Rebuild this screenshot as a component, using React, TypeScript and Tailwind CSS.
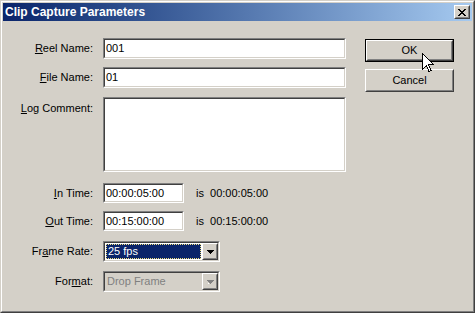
import type { ReactNode } from 'react';

const font = { fontFamily: '"Liberation Sans", Arial, sans-serif' };

function Sunken({ className = '', children, bg = 'bg-white' }: { className?: string; children?: ReactNode; bg?: string }) {
  return (
    <div className={`border border-t-[#808080] border-l-[#808080] border-b-white border-r-white ${className}`}>
      <div className={`h-full border border-t-[#404040] border-l-[#404040] border-b-[#d4d0c8] border-r-[#d4d0c8] ${bg} flex items-center`}>
        {children}
      </div>
    </div>
  );
}

function Raised({ className = '', children }: { className?: string; children?: ReactNode }) {
  return (
    <div className={`border border-t-white border-l-white border-b-[#404040] border-r-[#404040] bg-[#d4d0c8] ${className}`}>
      <div className="h-full border border-t-[#d4d0c8] border-l-[#d4d0c8] border-b-[#808080] border-r-[#808080] flex items-center justify-center">
        {children}
      </div>
    </div>
  );
}

function Arrow({ color = '#000', shadow = false }: { color?: string; shadow?: boolean }) {
  return (
    <svg width="8" height="5" viewBox="0 0 8 5" className="block">
      {shadow && <path d="M2 4h1v1h-1zM3 3h1v1h-1zM4 2h1v1h-1zM5 1h1v1h-1z" fill="#fff" />}
      <path d="M0.5 0.5h7v1h-1v1h-1v1h-1v1h-1v-1h-1v-1h-1v-1h-1z" fill={color} shapeRendering="crispEdges" />
    </svg>
  );
}

function Label({ children }: { children: ReactNode }) {
  return <div className="w-[90px] shrink-0 text-right leading-none">{children}</div>;
}

export default function App() {
  return (
    <div
      className="w-[475px] h-[313px] border border-t-[#d4d0c8] border-l-[#d4d0c8] border-b-[#404040] border-r-[#404040] text-[11px] text-black select-none"
      style={font}
    >
      <div className="h-full border border-t-white border-l-white border-b-[#808080] border-r-[#808080] bg-[#d4d0c8] p-px flex flex-col">
        {/* Title bar */}
        <div className="h-[18px] shrink-0 bg-gradient-to-r from-[#0a246a] to-[#a6caf0] flex items-center pl-[2px] pr-[2px]">
          <span className="text-white font-bold text-[12px] leading-none flex-1">Clip Capture Parameters</span>
          <Raised className="w-[16px] h-[14px]">
            <svg width="8" height="7" viewBox="0 0 8 7" className="block" shapeRendering="crispEdges">
              <path d="M0 0h2v1h-2zM6 0h2v1h-2zM1 1h2v1h-2zM5 1h2v1h-2zM2 2h4v1h-4zM3 3h2v1h-2zM2 4h4v1h-4zM1 5h2v1h-2zM5 5h2v1h-2zM0 6h2v1h-2zM6 6h2v1h-2z" fill="#000" />
            </svg>
          </Raised>
        </div>

        {/* Body */}
        <div className="flex-1 flex relative">
          <div className="flex flex-col pt-[17px] w-[343px]">
            <div className="flex items-center gap-[10px] h-[21px]">
              <Label><span className="underline">R</span>eel Name:</Label>
              <Sunken className="w-[243px] h-[21px]"><span className="pl-px leading-none">001</span></Sunken>
            </div>
            <div className="flex items-center gap-[10px] h-[21px] mt-[8px]">
              <Label><span className="underline">F</span>ile Name:</Label>
              <Sunken className="w-[243px] h-[21px]"><span className="pl-px leading-none">01</span></Sunken>
            </div>
            <div className="flex items-start gap-[10px] h-[75px] mt-[9px]">
              <div className="w-[90px] shrink-0 text-right pt-[6px] leading-none"><span className="underline">L</span>og Comment:</div>
              <Sunken className="w-[243px] h-[75px]" />
            </div>
            <div className="flex items-center gap-[10px] h-[20px] mt-[11px]">
              <Label><span className="underline">I</span>n Time:</Label>
              <Sunken className="w-[81px] h-[20px]"><span className="pl-px leading-none">00:00:05:00</span></Sunken>
              <span className="ml-[2px] leading-none">is&nbsp; 00:00:05:00</span>
            </div>
            <div className="flex items-center gap-[10px] h-[20px] mt-[8px]">
              <Label><span className="underline">O</span>ut Time:</Label>
              <Sunken className="w-[81px] h-[20px]"><span className="pl-px leading-none">00:15:00:00</span></Sunken>
              <span className="ml-[2px] leading-none">is&nbsp; 00:15:00:00</span>
            </div>
            <div className="flex items-center gap-[10px] h-[21px] mt-[10px]">
              <Label>Fr<span className="underline">a</span>me Rate:</Label>
              <Sunken className="w-[117px] h-[21px]">
                <div className="flex-1 h-full p-px">
                  <div className="h-full bg-[#0a246a] border border-dotted border-[#f0e080] text-white flex items-center leading-none pl-px">25 fps</div>
                </div>
                <Raised className="w-[16px] h-[17px]"><Arrow /></Raised>
              </Sunken>
            </div>
            <div className="flex items-center gap-[10px] h-[21px] mt-[9px]">
              <Label>For<span className="underline">m</span>at:</Label>
              <Sunken className="w-[117px] h-[21px]" bg="bg-[#d4d0c8]">
                <span className="flex-1 pl-[2px] text-[#808080] leading-none">Drop Frame</span>
                <Raised className="w-[16px] h-[17px]"><Arrow color="#808080" shadow /></Raised>
              </Sunken>
            </div>
          </div>

          {/* Buttons */}
          <div className="flex flex-col pt-[18px] pl-[19px]">
            <div className="w-[89px] h-[23px] border border-black">
              <Raised className="h-full">OK</Raised>
            </div>
            <Raised className="w-[89px] h-[23px] mt-[7px]">Cancel</Raised>
          </div>

          {/* Mouse cursor */}
          <svg
            className="absolute left-[419px] top-[32px]"
            width="12"
            height="20"
            viewBox="0 0 12 20"
            shapeRendering="crispEdges"
          >
            <path
              d="M0.5 0.5 L0.5 16.5 L4.5 12.5 L7 18.5 L9 17.5 L6.5 11.5 L11.5 11.5 Z"
              fill="#fff"
              stroke="#000"
              strokeWidth="1"
              strokeLinejoin="miter"
            />
          </svg>
        </div>
      </div>
    </div>
  );
}
